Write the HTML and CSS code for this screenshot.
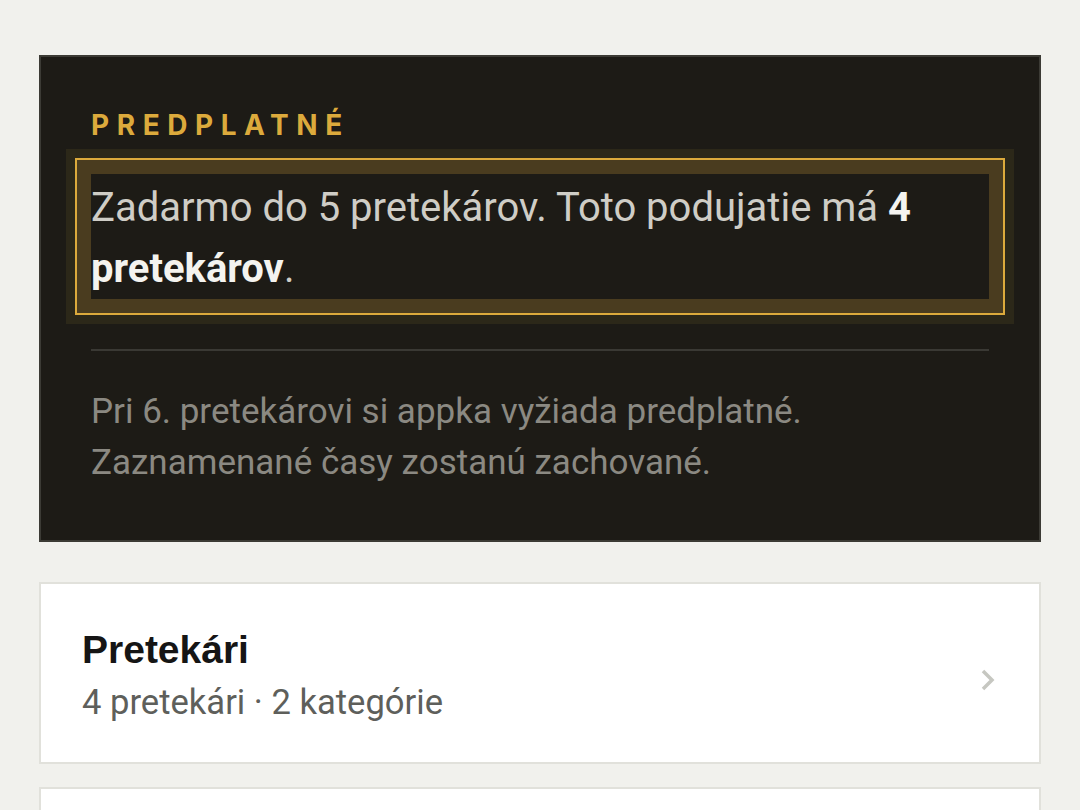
FILE: index.html
```html
<!doctype html>
<html>
<head>
  <link rel="stylesheet" href="styles.css">
</head>
<body>
  <div class="page">
    <section class="plan-card">
      <div class="plan-label">PREDPLATNÉ</div>
      <p class="plan-status">Zadarmo do 5 pretekárov. Toto podujatie má <b>4 pretekárov</b>.</p>
      <hr class="plan-divider">
      <p class="plan-note">Pri 6. pretekárovi si appka vyžiada predplatné.<br>Zaznamenané časy zostanú zachované.</p>
    </section>
    <a class="row-card" href="#">
      <div class="row-text">
        <div class="row-title">Pretekári</div>
        <div class="row-sub">4 pretekári · 2 kategórie</div>
      </div>
      <svg class="row-chevron" width="14" height="22" viewBox="0 0 14 22"><polyline points="2,2 11,11 2,20" fill="none" stroke="#c6c7c1" stroke-width="3.5"/></svg>
    </a>
    <div class="row-card row-card-next"></div>
  </div>
</body>
</html>
```

FILE: styles.css
```css
body {
  margin: 0;
  background-color: #f1f1ed;
  font-family: Roboto, "Noto Sans", sans-serif;
}
.page {
  padding: 55px 39px 0;
  display: flex;
  flex-direction: column;
}
.plan-card {
  background-color: #1d1b16;
  border: 2px solid #3c3b35;
  padding: 54px 50px 52px;
}
.plan-label {
  font-family: Inter, "Liberation Sans", sans-serif;
  font-weight: 700;
  font-size: 28px;
  line-height: 28px;
  letter-spacing: 0.27em;
  color: #dcaa3c;
}
.plan-status {
  margin: 35px 0 0;
  padding-top: 3px;
  font-size: 40px;
  line-height: 61px;
  color: #cfcdc6;
  box-shadow: 0 0 0 14px #4a3c1f, 0 0 0 16px #dcaa3c, 0 0 0 25px #2c2819;
}
.plan-status b {
  color: #f4f3ef;
}
.plan-divider {
  margin: 50px 0 0;
  border: 0;
  height: 2px;
  background-color: #3a3934;
}
.plan-note {
  margin: 35px 0 0;
  font-size: 35px;
  line-height: 51px;
  color: #8b8982;
}
.row-card {
  margin-top: 40px;
  background-color: #fff;
  border: 2px solid #e1e1db;
  padding: 42px 44px 36px 41px;
  display: flex;
  align-items: center;
  text-decoration: none;
}
.row-text {
  flex: 1;
}
.row-title {
  font-family: "Liberation Sans", Arial, sans-serif;
  font-weight: 700;
  font-size: 39px;
  line-height: 47px;
  color: #151515;
}
.row-sub {
  margin-top: 5px;
  font-size: 34.6px;
  line-height: 48px;
  color: #5e5f5b;
}
.row-chevron {
  display: block;
  margin-top: 8px;
}
.row-card-next {
  margin-top: 23px;
  height: 180px;
}
```
